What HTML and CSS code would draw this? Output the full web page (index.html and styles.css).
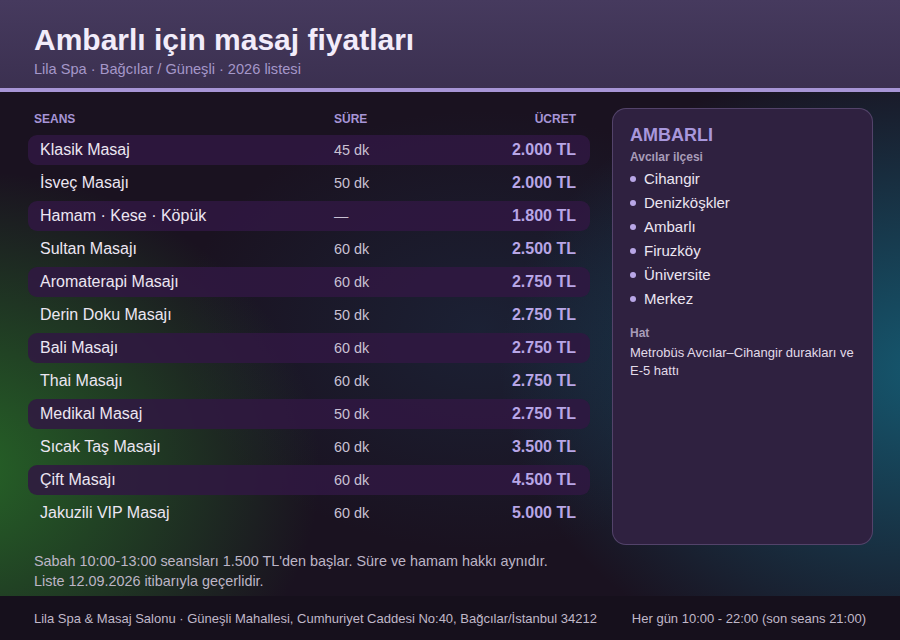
FILE: index.html
```html
<!DOCTYPE html>
<html lang="tr">
<head>
<meta charset="utf-8">
<title>Ambarlı için masaj fiyatları</title>
<link rel="stylesheet" href="styles.css">
</head>
<body>
<div class="page">
  <header class="hero">
    <h1 class="title">Ambarlı için masaj fiyatları</h1>
    <div class="subtitle">Lila Spa · Bağcılar / Güneşli · 2026 listesi</div>
  </header>
  <main class="main">
    <section class="prices">
      <div class="thead">
        <span class="c-name">Seans</span>
        <span class="c-dur">Süre</span>
        <span class="c-price">Ücret</span>
      </div>
      <div class="row alt"><span class="c-name">Klasik Masaj</span><span class="c-dur">45 dk</span><span class="c-price">2.000 TL</span></div>
      <div class="row"><span class="c-name">İsveç Masajı</span><span class="c-dur">50 dk</span><span class="c-price">2.000 TL</span></div>
      <div class="row alt"><span class="c-name">Hamam · Kese · Köpük</span><span class="c-dur">—</span><span class="c-price">1.800 TL</span></div>
      <div class="row"><span class="c-name">Sultan Masajı</span><span class="c-dur">60 dk</span><span class="c-price">2.500 TL</span></div>
      <div class="row alt"><span class="c-name">Aromaterapi Masajı</span><span class="c-dur">60 dk</span><span class="c-price">2.750 TL</span></div>
      <div class="row"><span class="c-name">Derin Doku Masajı</span><span class="c-dur">50 dk</span><span class="c-price">2.750 TL</span></div>
      <div class="row alt"><span class="c-name">Bali Masajı</span><span class="c-dur">60 dk</span><span class="c-price">2.750 TL</span></div>
      <div class="row"><span class="c-name">Thai Masajı</span><span class="c-dur">60 dk</span><span class="c-price">2.750 TL</span></div>
      <div class="row alt"><span class="c-name">Medikal Masaj</span><span class="c-dur">50 dk</span><span class="c-price">2.750 TL</span></div>
      <div class="row"><span class="c-name">Sıcak Taş Masajı</span><span class="c-dur">60 dk</span><span class="c-price">3.500 TL</span></div>
      <div class="row alt"><span class="c-name">Çift Masajı</span><span class="c-dur">60 dk</span><span class="c-price">4.500 TL</span></div>
      <div class="row"><span class="c-name">Jakuzili VIP Masaj</span><span class="c-dur">60 dk</span><span class="c-price">5.000 TL</span></div>
      <div class="notes">
        <p>Sabah 10:00-13:00 seansları 1.500 TL'den başlar. Süre ve hamam hakkı aynıdır.</p>
        <p>Liste 12.09.2026 itibarıyla geçerlidir.</p>
      </div>
    </section>
    <aside class="side">
      <h2 class="side-title">AMBARLI</h2>
      <div class="side-label">Avcılar ilçesi</div>
      <ul class="hoods">
        <li>Cihangir</li>
        <li>Denizköşkler</li>
        <li>Ambarlı</li>
        <li>Firuzköy</li>
        <li>Üniversite</li>
        <li>Merkez</li>
      </ul>
      <div class="side-label hat">Hat</div>
      <p class="side-text">Metrobüs Avcılar–Cihangir durakları ve E-5 hattı</p>
    </aside>
  </main>
  <footer class="foot">
    <span>Lila Spa &amp; Masaj Salonu · Güneşli Mahallesi, Cumhuriyet Caddesi No:40, Bağcılar/İstanbul 34212</span>
    <span>Her gün 10:00 - 22:00 (son seans 21:00)</span>
  </footer>
</div>
</body>
</html>
```

FILE: styles.css
```css
* { box-sizing: border-box; }
html, body { margin: 0; padding: 0; }
body {
  width: 900px;
  height: 640px;
  overflow: hidden;
  font-family: "Liberation Sans", Arial, sans-serif;
  background-color: #1a1220;
}
.page {
  width: 900px;
  height: 640px;
  display: flex;
  flex-direction: column;
  background:
    radial-gradient(ellipse 360px 300px at -40px 470px, rgba(40, 115, 40, 0.85), rgba(40, 115, 40, 0) 100%),
    radial-gradient(ellipse 430px 320px at 930px 370px, rgba(20, 100, 125, 0.85), rgba(20, 100, 125, 0) 100%),
    radial-gradient(ellipse 300px 220px at 480px 330px, rgba(30, 60, 90, 0.35), rgba(30, 60, 90, 0) 100%),
    #1a1220;
}
.hero {
  height: 92px;
  padding: 23px 34px 0;
  background: linear-gradient(180deg, #463a5e 0%, #3b3050 100%);
  border-bottom: 4px solid #a795d6;
}
.title {
  margin: 0;
  font-size: 30px;
  line-height: 34px;
  font-weight: 700;
  color: #f2ecfa;
}
.subtitle {
  margin-top: 3px;
  font-size: 14.6px;
  line-height: 18px;
  color: #a597c9;
}
.main {
  flex: 1;
  display: flex;
  gap: 22px;
  padding: 16px 27px 0 28px;
}
.prices {
  width: 562px;
  display: flex;
  flex-direction: column;
  gap: 3px;
}
.thead, .row {
  display: grid;
  grid-template-columns: 1fr 142px 100px;
  align-items: center;
}
.thead {
  height: 20px;
  margin-top: 1px;
  margin-bottom: 3px;
  padding: 0 14px 0 6px;
  font-size: 12px;
  font-weight: 700;
  text-transform: uppercase;
  color: #a795d6;
}
.row {
  height: 30px;
  padding: 0 14px 0 12px;
  border-radius: 9px;
  font-size: 16px;
  color: #ece6f2;
}
.row.alt { background: rgba(48, 24, 66, 0.85); }
.c-dur { font-size: 14.4px; color: #c9c1d3; }
.thead .c-dur { font-size: 12px; color: #a795d6; }
.c-price { text-align: right; }
.row .c-price { font-weight: 700; color: #b8a6e6; font-size: 16px; }
.notes {
  margin-top: 20px;
  padding-left: 6px;
  font-size: 14.4px;
  line-height: 20px;
  color: #bdb5c6;
}
.notes p { margin: 0; }
.side {
  width: 261px;
  height: 437px;
  padding: 15px 14px 15px 17px;
  background: #2f2140;
  border: 1px solid rgba(190, 170, 230, 0.25);
  border-radius: 14px;
}
.side-title {
  margin: 0;
  font-size: 18px;
  line-height: 22px;
  font-weight: 700;
  color: #a897dc;
}
.side-label {
  margin-top: 3px;
  font-size: 12px;
  font-weight: 700;
  line-height: 16px;
  color: #a89cb8;
}
.hoods {
  list-style: none;
  margin: 1px 0 0;
  padding: 0;
}
.hoods li {
  display: flex;
  align-items: center;
  height: 24px;
  font-size: 15px;
  color: #ece6f2;
}
.hoods li::before {
  content: "";
  width: 6px;
  height: 6px;
  border-radius: 50%;
  background: #b8a6e6;
  margin: 2px 8px 0 0;
}
.side-label.hat { margin-top: 15px; }
.side-text {
  margin: 3px 0 0;
  font-size: 13px;
  line-height: 18px;
  color: #e2dbe9;
}
.foot {
  height: 44px;
  display: flex;
  align-items: center;
  justify-content: space-between;
  padding: 0 34px;
  background: #16101c;
  font-size: 13px;
  color: #c0b8c9;
}
```
